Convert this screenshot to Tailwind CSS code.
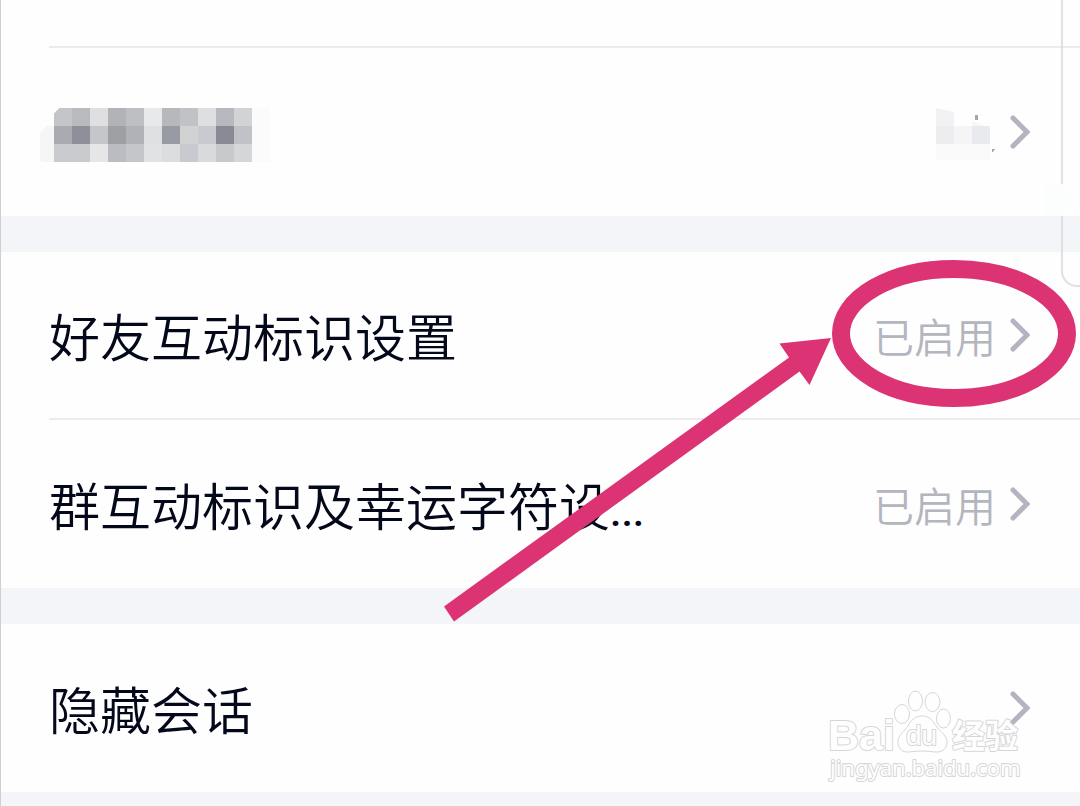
<!DOCTYPE html>
<html lang="zh-CN">
<head>
    <meta charset="UTF-8">
    <meta name="viewport" content="width=device-width, initial-scale=1.0">
    <script src="https://cdn.jsdelivr.net/npm/@tailwindcss/browser@4"></script>
    <title>互动标识设置</title>
</head>
<body class="bg-[#f4f5f9] font-['Noto_Sans_CJK_SC',sans-serif] font-[350] text-[#03081a]">
    <div class="relative min-h-screen overflow-hidden border-l border-[#d0d0d3]">

        <!-- Settings list -->
        <main class="flex flex-col gap-9">
            <section class="bg-[#fefefe] pl-12">
                <div class="h-12 border-b-2 border-[#ebebf0]"></div>
                <a href="#" aria-label="详情" class="flex h-42 items-center justify-between pr-[50px]">
                    <!-- Blurred name -->
                    <svg class="-ml-[9px] h-[84px] w-[232px]" viewBox="40 90 232 84" shape-rendering="crispEdges" aria-hidden="true">
                        <path d="M47 126h7v36H42q-2-1-2-4v-22q1-7 7-10z" fill="#f5f7f7"/>
                        <path d="M252 108h18v54h-18z" fill="#fbfbfb"/>
                        <path d="M59 108h13v18H54v-13z" fill="#c4c5c9"/>
                        <path d="M72 108h18v18H72z" fill="#b9babe"/>
                        <path d="M90 108h18v18H90z" fill="#dfdfe2"/>
                        <path d="M108 108h18v18h-18z" fill="#b2b3b8"/>
                        <path d="M126 108h18v18h-18z" fill="#bebfc3"/>
                        <path d="M144 108h18v18h-18z" fill="#e8e9eb"/>
                        <path d="M162 108h18v18h-18z" fill="#b6b8bb"/>
                        <path d="M180 108h18v18h-18z" fill="#c1c2c5"/>
                        <path d="M198 108h18v18h-18z" fill="#dedfe1"/>
                        <path d="M216 108h18v18h-18z" fill="#b8b9be"/>
                        <path d="M234 108h18v18h-18z" fill="#d2d3d5"/>
                        <path d="M54 126h18v18H54z" fill="#aaabb0"/>
                        <path d="M72 126h18v18H72z" fill="#8d909a"/>
                        <path d="M90 126h18v18H90z" fill="#c5c6ca"/>
                        <path d="M108 126h18v18h-18z" fill="#9fa0a4"/>
                        <path d="M126 126h18v18h-18z" fill="#b1b2b7"/>
                        <path d="M144 126h18v18h-18z" fill="#dfe0e2"/>
                        <path d="M162 126h18v18h-18z" fill="#999ba4"/>
                        <path d="M180 126h18v18h-18z" fill="#d1d3d2"/>
                        <path d="M198 126h18v18h-18z" fill="#c9cacf"/>
                        <path d="M216 126h18v18h-18z" fill="#888b93"/>
                        <path d="M234 126h18v18h-18z" fill="#c1c2c7"/>
                        <path d="M54 144h36v18H54z" fill="#cacbcf"/>
                        <path d="M90 144h18v18H90z" fill="#e6e6e9"/>
                        <path d="M108 144h18v18h-18z" fill="#bbbcc1"/>
                        <path d="M126 144h18v18h-18z" fill="#c5c6ca"/>
                        <path d="M144 144h18v18h-18z" fill="#e1e2e4"/>
                        <path d="M162 144h18v18h-18z" fill="#dcdddf"/>
                        <path d="M180 144h18v18h-18z" fill="#c9cacf"/>
                        <path d="M198 144h18v18h-18z" fill="#d9dadc"/>
                        <path d="M216 144h18v18h-18z" fill="#c8c9cd"/>
                        <path d="M234 144h18v18h-18z" fill="#d5d6d8"/>
                    </svg>
                    <span class="flex items-center gap-3">
                        <svg class="h-14 w-16" viewBox="934 104 64 56" aria-hidden="true">
                            <path d="M936 108l18 4v14h-18z" fill="#f2f2f4"/>
                            <path d="M936 126h18v18h-18z" fill="#ededf0"/>
                            <path d="M954 126h18v18h-18z" fill="#f5f5f7"/>
                            <path d="M972 126h16q2 0 2 2v16h-18z" fill="#e9eaef"/>
                            <path d="M972 121l13 5h-13z" fill="#f6f6f8"/>
                            <path d="M936 144h54v16h-54z" fill="#f9f9fa"/>
                            <path d="M975 115h3v5h-3zM992 149h3l-2 3h-1z" fill="#a5a6aa"/>
                        </svg>
                        <svg class="h-9 w-5" viewBox="0 0 20 36" fill="none" stroke="#b3b4c0" stroke-width="5" stroke-linecap="round" aria-hidden="true"><path d="M3 4l14 14L3 32"/></svg>
                    </span>
                </a>
            </section>

            <section class="bg-[#fefefe] pl-12">
                <a href="#" class="flex h-42 items-center justify-between border-b-2 border-[#ebebf0] pr-[50px]">
                    <span class="text-[51px] leading-[72px]">好友互动标识设置</span>
                    <span class="flex items-center gap-3.5">
                        <span class="text-[41px] leading-[60px] text-[#b3b5bf]">已启用</span>
                        <svg class="h-9 w-5" viewBox="0 0 20 36" fill="none" stroke="#b3b4c0" stroke-width="5" stroke-linecap="round" aria-hidden="true"><path d="M3 4l14 14L3 32"/></svg>
                    </span>
                </a>
                <a href="#" class="flex h-42 items-center justify-between pr-[50px]">
                    <span class="text-[51px] leading-[72px]">群互动标识及幸运字符设<span class="font-['Roboto',sans-serif] text-[41px] leading-none font-medium">...</span></span>
                    <span class="flex items-center gap-3.5">
                        <span class="text-[41px] leading-[60px] text-[#b3b5bf]">已启用</span>
                        <svg class="h-9 w-5" viewBox="0 0 20 36" fill="none" stroke="#b3b4c0" stroke-width="5" stroke-linecap="round" aria-hidden="true"><path d="M3 4l14 14L3 32"/></svg>
                    </span>
                </a>
            </section>

            <section class="bg-[#fefefe] pl-12">
                <a href="#" class="flex h-42 items-center justify-between pr-[50px]">
                    <span class="text-[51px] leading-[72px]">隐藏会话</span>
                    <svg class="h-9 w-5" viewBox="0 0 20 36" fill="none" stroke="#b3b4c0" stroke-width="5" stroke-linecap="round" aria-hidden="true"><path d="M3 4l14 14L3 32"/></svg>
                </a>
            </section>
        </main>

        <!-- Edge of the side panel -->
        <div class="absolute top-0 right-0 h-[287px] w-[19px] rounded-bl-2xl border-b-2 border-l-2 border-[#d9dadd]/80"></div>
        <div class="absolute top-[184px] right-2 h-8 w-7 rounded-r-xl bg-[#fcfdfd]"></div>

        <!-- Arrow and ring -->
        <svg class="pointer-events-none absolute top-[250px] right-0 h-[380px] w-[640px]" viewBox="440 250 640 380" aria-hidden="true">
            <ellipse cx="954" cy="333.500" rx="113" ry="64.500" fill="none" stroke="#dc3374" stroke-width="18"/>
            <path d="M444 606.500L789 357.500l-9.500-14L831 338l-21.500 47-10-13.500L454 621.500z" fill="#dc3374"/>
        </svg>

        <!-- Watermark -->
        <svg class="pointer-events-none absolute top-[686px] right-[50px] h-[100px] w-[205px]" viewBox="825 686 205 100" fill="#fefefe" stroke="#d6d6d8" role="img" aria-label="Baidu经验">
            <ellipse cx="902" cy="714" rx="7.500" ry="9.500"/>
            <ellipse cx="915.500" cy="701" rx="7" ry="10"/>
            <ellipse cx="932.500" cy="702" rx="7.500" ry="9.500"/>
            <ellipse cx="943.500" cy="718.500" rx="7" ry="9.500"/>
            <path d="M922 716c8 0 11 5 14 10 4 6 11 9 11 16 0 6-4 10-10 10-5 0-9-1-15-1s-10 1-15 1c-6 0-9-5-9-10 0-7 6-10 10-16 3-5 6-10 14-10z"/>
            <g stroke-width="2" paint-order="stroke" stroke-linejoin="round">
                <text x="828" y="750" font-family="Liberation Sans, sans-serif" font-weight="700" font-size="43">Bai</text>
                <text x="906" y="745" font-family="Liberation Sans, sans-serif" font-weight="400" font-size="28">du</text>
                <text x="952" y="748" font-family="Noto Sans CJK SC, sans-serif" font-weight="700" font-size="33">经验</text>
                <text x="830" y="776" font-family="Noto Sans, sans-serif" font-weight="400" font-size="22">jingyan.baidu.com</text>
            </g>
        </svg>
    </div>
</body>
</html>
